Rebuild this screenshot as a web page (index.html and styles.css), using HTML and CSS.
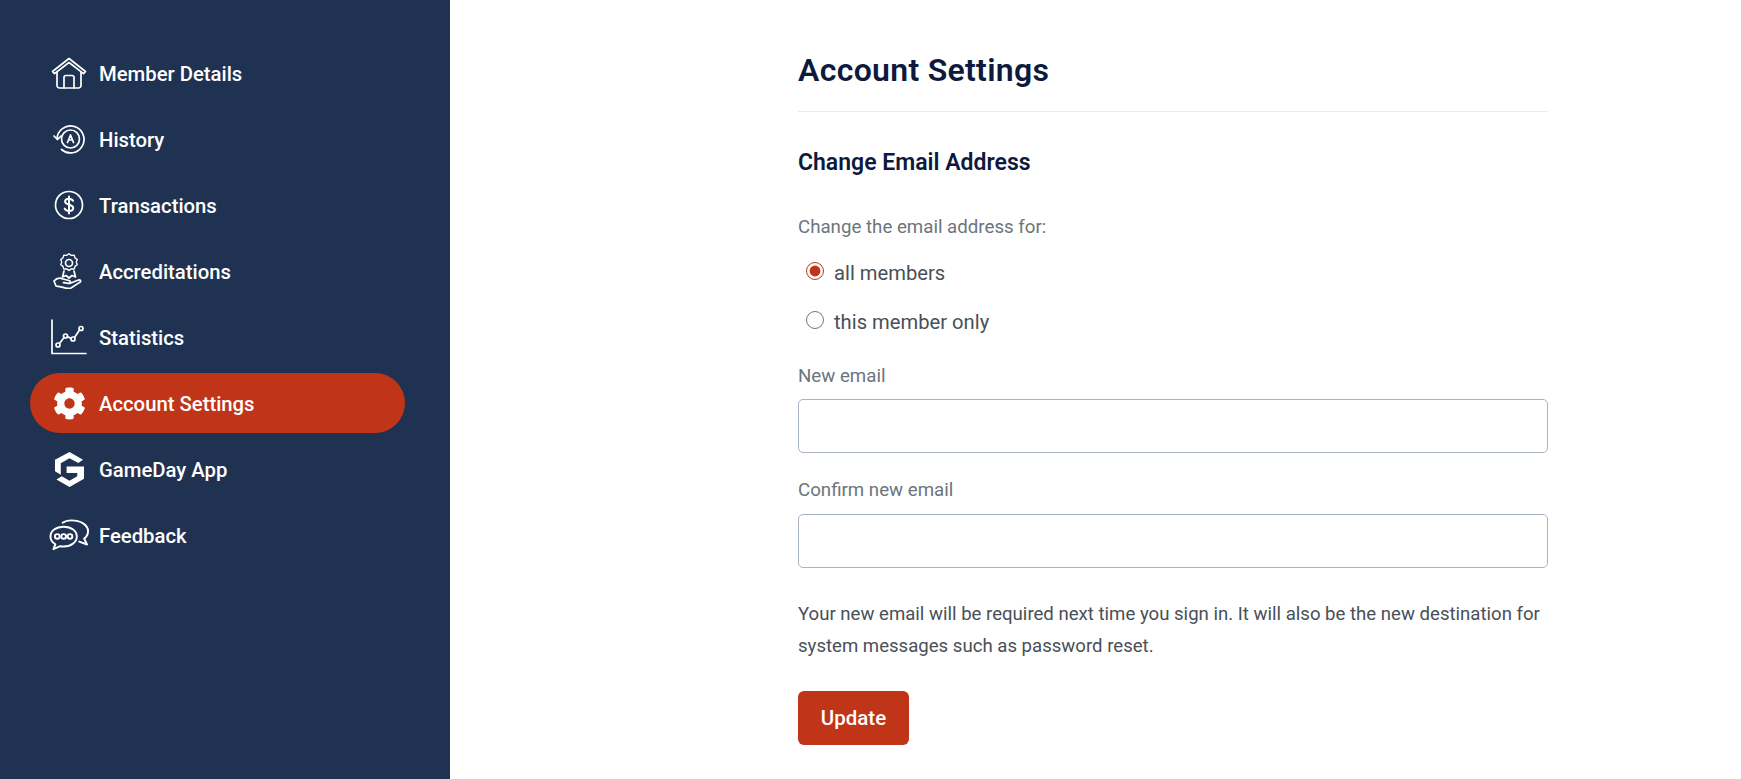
FILE: index.html
```html
<!DOCTYPE html>
<html lang="en">
<head>
<meta charset="utf-8">
<title>Account Settings</title>
<link rel="stylesheet" href="styles.css">
</head>
<body>
<div class="page">
  <nav class="sidebar">
    <a class="nav-item"><span class="nav-icon"><svg viewBox="0 0 36 32" width="36" height="32" class="line"><path d="M1.500 14.500 18 1.500l16.500 13-2 2.200L18 5.500 3.500 16.700z"/><path d="M6 15v13.500a2.500 2.500 0 0 0 2.500 2.500h19a2.500 2.500 0 0 0 2.500-2.500V15"/><path d="M13 31V20.500a2 2 0 0 1 2-2h6a2 2 0 0 1 2 2V31"/></svg></span><span class="nav-label">Member Details</span></a>
    <a class="nav-item"><span class="nav-icon"><svg viewBox="0 0 32 30" width="32" height="30" class="line"><path d="M4 15a13.500 13.500 0 1 1 4.500 10.500"/><path d="M1 12l3.500 3.500L8 12"/><circle cx="17.500" cy="15" r="9"/><path d="M14.500 18.500l3-7.500 3 7.500M15.500 16h4"/></svg></span><span class="nav-label">History</span></a>
    <a class="nav-item"><span class="nav-icon"><svg viewBox="0 0 30 30" width="30" height="30" class="line"><circle cx="15" cy="15" r="13.500"/><path class="thick" d="M19 10.800c-.7-1.400-2.200-2.100-4-2.100-2.300 0-3.900 1.100-3.900 2.900 0 4.100 8.100 2.200 8.100 6.400 0 1.800-1.800 2.900-4.200 2.900-2.100 0-3.600-.8-4.300-2.300M15 6.500v17"/></svg></span><span class="nav-label">Transactions</span></a>
    <a class="nav-item"><span class="nav-icon"><svg viewBox="0 0 34 36" width="34" height="36" class="line"><path d="M17 1l3 2 3.500-.2 1 3.300 2.800 2-1.200 3.300 1.200 3.300-2.800 2-1 3.300-3.500-.2-3 2-3-2-3.500.2-1-3.300-2.800-2 1.200-3.300-1.200-3.300 2.800-2 1-3.300L14 3z" transform="translate(3.400 0) scale(.8)"/><circle cx="17" cy="10" r="3.500"/><path d="M12 18l-1.500 6 3.500-1.500 3 2.500 3-2.500 3.500 1.500L22 18"/><path d="M2 28c3-3.500 6-3.500 9-2l6 1.500c2 .6 1.500 3-.5 2.800l-5-.6 6 .8 9-3.500c2-.6 3 1.300 1.200 2.400L19 35c-3 .8-5 .4-8-.6-3-1-6-1-7-1.400z"/></svg></span><span class="nav-label">Accreditations</span></a>
    <a class="nav-item"><span class="nav-icon"><svg viewBox="0 0 36 36" width="36" height="36" class="line"><path d="M1 1v33.500h34"/><circle cx="7" cy="26" r="2"/><circle cx="14.500" cy="17" r="2"/><circle cx="22" cy="20" r="2"/><circle cx="30" cy="9.500" r="2"/><path d="M8.500 24.500l4.500-6M16.500 17.500l3.500 2M23.500 18.500l5-7.500"/></svg></span><span class="nav-label">Statistics</span></a>
    <a class="nav-item is-active"><span class="nav-icon"><svg viewBox="0 0 512 512" width="33" height="33"><path fill="#fff" d="M487.400 315.700l-42.600-24.600c4.300-23.200 4.300-47 0-70.200l42.600-24.600c4.900-2.800 7.100-8.600 5.500-14-11.100-35.600-30-67.800-54.700-94.600-3.800-4.100-10-5.100-14.800-2.300L380.800 110c-17.900-15.400-38.500-27.300-60.800-35.100V25.800c0-5.600-3.900-10.500-9.400-11.700-36.700-8.200-74.300-7.800-109.200 0-5.500 1.200-9.400 6.100-9.400 11.700V75c-22.200 7.900-42.800 19.800-60.800 35.100L88.700 85.500c-4.900-2.800-11-1.900-14.800 2.300-24.700 26.700-43.600 58.900-54.700 94.600-1.700 5.400.6 11.200 5.500 14L67.300 221c-4.300 23.200-4.300 47 0 70.200l-42.600 24.600c-4.900 2.800-7.100 8.600-5.500 14 11.100 35.600 30 67.800 54.700 94.600 3.800 4.100 10 5.100 14.800 2.300l42.600-24.600c17.900 15.400 38.500 27.300 60.800 35.100v49.200c0 5.600 3.900 10.500 9.400 11.700 36.700 8.200 74.300 7.800 109.200 0 5.500-1.200 9.400-6.100 9.400-11.700v-49.200c22.200-7.900 42.800-19.800 60.800-35.100l42.600 24.600c4.900 2.800 11 1.900 14.800-2.300 24.700-26.700 43.600-58.900 54.700-94.600 1.500-5.500-.7-11.300-5.600-14.100zM256 336c-44.100 0-80-35.900-80-80s35.900-80 80-80 80 35.900 80 80-35.900 80-80 80z"/></svg></span><span class="nav-label">Account Settings</span></a>
    <a class="nav-item"><span class="nav-icon"><svg viewBox="0 0 32 36" width="31" height="35"><path fill="#fff" d="M16 0l14 8-5 3.200L16 6.300 7 11.500v11.800L1 19.800V8zM13 15h18v12.500L16 36 2.500 28.200 8 25l8 4.700 8-4.700v-3.500H13z"/></svg></span><span class="nav-label">GameDay App</span></a>
    <a class="nav-item"><span class="nav-icon icon-wide"><svg viewBox="0 0 42 32" width="42" height="32" class="line"><path class="thick" d="M15 7.500C7 7.500 1.500 12 1.500 17.500c0 3.300 2 6.200 5 8l-2 5 7-3c1.100.2 2.300.3 3.500.3 8 0 13.500-4.800 13.500-10.300S23 7.500 15 7.500z"/><path class="thick" d="M14 3.500C16 2 19.500 1 23 1c9 0 17 4.500 17 11 0 3.300-1.500 6-4 7.700l3 6-8-3"/><circle class="thick" cx="8.500" cy="17.500" r="2.400"/><circle class="thick" cx="15" cy="17.500" r="2.400"/><circle class="thick" cx="21.500" cy="17.500" r="2.400"/></svg></span><span class="nav-label">Feedback</span></a>
  </nav>
  <main class="content">
    <div class="panel">
      <h1 class="page-title">Account Settings</h1>
      <h2 class="section-title">Change Email Address</h2>
      <form class="form">
        <p class="field-label label-first">Change the email address for:</p>
        <label class="radio-row"><input type="radio" name="scope" checked><span>all members</span></label>
        <label class="radio-row"><input type="radio" name="scope"><span>this member only</span></label>
        <label class="field-label label-new" for="new-email">New email</label>
        <input class="text-input input-first" id="new-email" type="text">
        <label class="field-label label-confirm" for="confirm-email">Confirm new email</label>
        <input class="text-input" id="confirm-email" type="text">
        <p class="help">Your new email will be required next time you sign in. It will also be the new destination for system messages such as password reset.</p>
        <button class="btn" type="button">Update</button>
      </form>
    </div>
  </main>
</div>
</body>
</html>
```
FILE: styles.css
```css
* { box-sizing: border-box; }
html, body { margin: 0; height: 100%; }
body { font-family: Roboto, "Noto Sans", sans-serif; background: #fff; overflow: hidden; }
.page { display: flex; height: 779px; }
.sidebar { width: 450px; flex: none; background: #1f3251; padding: 43px 45px 0 30px; display: flex; flex-direction: column; gap: 6px; }
.nav-item { height: 60px; flex: none; display: flex; align-items: center; color: #fff; font-size: 20.3px; font-weight: 500; border-radius: 30px; }
.nav-item.is-active { background: #c03518; }
.nav-label { padding-top: 2px; }
.nav-icon { width: 69px; flex: none; display: flex; justify-content: center; padding-left: 19px; padding-right: 10px; }
.icon-wide { padding-left: 19px; padding-right: 9px; }
.line { fill: none; stroke: #fff; stroke-width: 1.700; stroke-linejoin: round; stroke-linecap: round; }
.line .thick { stroke-width: 2; }
.content { flex: 1; padding: 0 0 0 348px; }
.panel { width: 750px; }
.page-title { margin: 0; padding: 49px 0 20px; font-size: 32px; line-height: 42px; font-weight: 600; letter-spacing: .3px; color: #0e1a3c; border-bottom: 1px solid #e9ecef; }
.section-title { margin: 0; padding-top: 35px; font-size: 23px; line-height: 32px; font-weight: 600; color: #0e1a3c; }
.form { display: flex; flex-direction: column; align-items: flex-start; }
.field-label { display: block; margin: 0; font-size: 18.7px; line-height: 28px; color: #6c757d; }
.label-first { margin-top: 34px; }
.label-new { margin-top: 16px; }
.label-confirm { margin-top: 23px; }
.radio-row { display: flex; align-items: center; gap: 10px; height: 49px; margin-left: 8px; font-size: 20.2px; color: #495057; }
.radio-row input { width: 18px; height: 18px; margin: 0 0 4px; accent-color: #c03518; }
.radio-row:first-of-type { margin-top: 7px; }
.text-input { display: block; width: 750px; height: 54px; margin-top: 10px; border: 1px solid #a9b5c2; border-radius: 5px; background: #fff; padding: 0 12px; }
.input-first { margin-top: 9px; }
.help { margin: 30px 0 0; font-size: 18.6px; line-height: 32px; color: #495057; }
.btn { margin-top: 29px; width: 111px; height: 54px; border: 0; border-radius: 6px; background: #c03518; color: #fff; font: 500 20.5px Roboto, sans-serif; }
```
